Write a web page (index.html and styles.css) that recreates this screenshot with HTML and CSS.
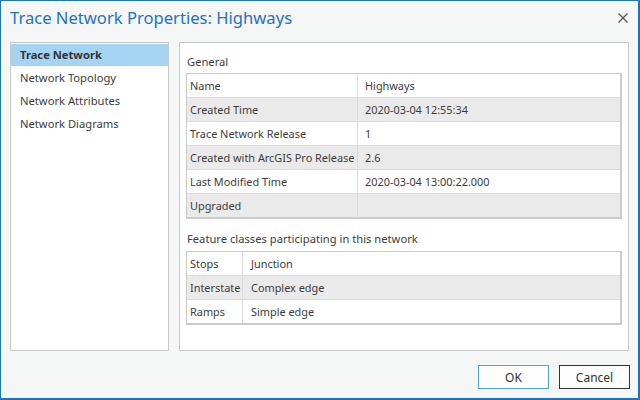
FILE: index.html
```html
<!DOCTYPE html>
<html>
<head>
<meta charset="utf-8">
<link rel="stylesheet" href="styles.css">
</head>
<body>
<div class="window">
  <div class="titlebar">
    <div class="title">Trace Network Properties: Highways</div>
    <svg class="close" width="10" height="10" viewBox="0 0 10 10"><path d="M0.5 0.5 L9.5 9.5 M9.5 0.5 L0.5 9.5" stroke="#555" stroke-width="1.3" fill="none"/></svg>
  </div>
  <div class="content">
    <div class="nav">
      <div class="nav-item selected">Trace Network</div>
      <div class="nav-item">Network Topology</div>
      <div class="nav-item">Network Attributes</div>
      <div class="nav-item">Network Diagrams</div>
    </div>
    <div class="main">
      <div class="section-label">General</div>
      <div class="grid general">
        <div class="row"><div class="c1">Name</div><div class="c2">Highways</div></div>
        <div class="row alt"><div class="c1">Created Time</div><div class="c2">2020-03-04 12:55:34</div></div>
        <div class="row"><div class="c1">Trace Network Release</div><div class="c2">1</div></div>
        <div class="row alt"><div class="c1">Created with ArcGIS Pro Release</div><div class="c2">2.6</div></div>
        <div class="row"><div class="c1">Last Modified Time</div><div class="c2">2020-03-04 13:00:22.000</div></div>
        <div class="row alt"><div class="c1">Upgraded</div><div class="c2"></div></div>
      </div>
      <div class="section-label second">Feature classes participating in this network</div>
      <div class="grid classes">
        <div class="row"><div class="c1">Stops</div><div class="c2">Junction</div></div>
        <div class="row alt"><div class="c1">Interstate</div><div class="c2">Complex edge</div></div>
        <div class="row"><div class="c1">Ramps</div><div class="c2">Simple edge</div></div>
      </div>
    </div>
  </div>
  <div class="footer">
    <button class="btn ok">OK</button>
    <button class="btn cancel">Cancel</button>
  </div>
</div>
</body>
</html>
```
FILE: styles.css
```css
* { box-sizing: border-box; }
html, body { margin: 0; padding: 0; }
body {
  width: 640px;
  height: 400px;
  font-family: "Noto Sans", "Open Sans", sans-serif;
  font-size: 11.2px;
  color: #3c3c3c;
}
.window {
  width: 640px;
  height: 400px;
  background: #f5f6f6;
  border: 1px solid #1a74c4;
  border-right-width: 2px;
  border-bottom-width: 2px;
  display: flex;
  flex-direction: column;
}
.titlebar {
  height: 41px;
  display: flex;
  align-items: flex-start;
  justify-content: space-between;
  padding: 5px 10px 0 9px;
}
.title {
  font-size: 16.6px;
  color: #1f72c0;
  line-height: 24px;
}
.close {
  margin-top: 7px;
}
.content {
  display: flex;
  gap: 10px;
  padding: 0 9px 0 9px;
  height: 309px;
}
.nav {
  width: 160px;
  background: #fff;
  border: 1px solid #c9c9c9;
  padding-top: 1px;
}
.nav-item {
  height: 23px;
  line-height: 22px;
  padding-left: 9px;
  white-space: nowrap;
}
.nav-item.selected {
  background: #a4d4f2;
  font-weight: bold;
  height: 22px;
  line-height: 22px;
  margin-bottom: 1px;
  color: #333;
}
.main {
  width: 450px;
  background: #fff;
  border: 1px solid #c9c9c9;
  padding: 11px 6px 0 6px;
}
.section-label {
  height: 19px;
  line-height: 16px;
  padding-left: 1px;
}
.section-label.second {
  margin-top: 11px;
  height: 21px;
  line-height: 18px;
}
.grid {
  width: 436px;
  border: 1px solid #cbcbcb;
  border-right-width: 2px;
  border-bottom-width: 2px;
  font-size: 10.9px;
}
.row {
  display: flex;
  height: 24px;
  border-bottom: 1px solid #dcdcdc;
  background: #fff;
}
.row:last-child { border-bottom: none; height: 23px; }
.row.alt { background: #eaeaea; }
.c1, .c2 {
  line-height: 23px;
  padding-left: 3px;
  white-space: nowrap;
  overflow: visible;
}
.c1 { border-right: 1px solid #dcdcdc; }
.general .c1 { width: 171px; }
.classes .c1 { width: 56px; }
.c2 { padding-left: 7px; flex: 1; }
.classes .c2 { padding-left: 8px; }
.footer {
  flex: 1;
  display: flex;
  justify-content: flex-end;
  align-items: flex-start;
  gap: 10px;
  padding: 14px 8px 0 0;
}
.btn {
  width: 71px;
  height: 24px;
  font-family: inherit;
  font-size: 12px;
  color: #333;
  background: #fdfdfd;
  border: 1px solid #333;
  padding: 0;
}
.btn.ok { border-color: #4ba3e3; }
```
